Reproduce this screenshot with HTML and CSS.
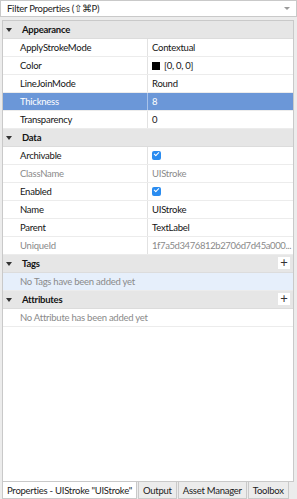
FILE: index.html
```html
<!DOCTYPE html>
<html lang="en">
<head>
<meta charset="UTF-8" />
<title>Properties</title>
<link rel="stylesheet" href="styles.css">
</head>
<body>
  <div class="window">
    <!-- Filter box -->
    <div class="filter">
      <span class="filter-text">Filter Properties (⇧⌘P)</span>
      <span class="filter-arrow"></span>
    </div>

    <!-- Property grid -->
    <div class="panel">
      <div class="section-head"><span class="caret"></span>Appearance</div>
      <div class="row"><div class="key">ApplyStrokeMode</div><div class="val">Contextual</div></div>
      <div class="row"><div class="key">Color</div><div class="val"><span class="swatch"></span>[0, 0, 0]</div></div>
      <div class="row"><div class="key">LineJoinMode</div><div class="val">Round</div></div>
      <div class="row selected"><div class="key">Thickness</div><div class="val">8</div></div>
      <div class="row"><div class="key">Transparency</div><div class="val">0</div></div>

      <div class="section-head"><span class="caret"></span>Data</div>
      <div class="row"><div class="key">Archivable</div><div class="val"><span class="check"></span></div></div>
      <div class="row muted"><div class="key">ClassName</div><div class="val">UIStroke</div></div>
      <div class="row"><div class="key">Enabled</div><div class="val"><span class="check"></span></div></div>
      <div class="row"><div class="key">Name</div><div class="val">UIStroke</div></div>
      <div class="row"><div class="key">Parent</div><div class="val">TextLabel</div></div>
      <div class="row muted"><div class="key">UniqueId</div><div class="val uid">1f7a5d3476812b2706d7d45a000...</div></div>

      <div class="section-head"><span class="caret"></span>Tags<span class="plus">+</span></div>
      <div class="empty tinted">No Tags have been added yet</div>

      <div class="section-head"><span class="caret"></span>Attributes<span class="plus">+</span></div>
      <div class="empty">No Attribute has been added yet</div>
    </div>

    <!-- Bottom tabs -->
    <div class="tabs">
      <div class="tab active">Properties - UIStroke "UIStroke"</div>
      <div class="tab">Output</div>
      <div class="tab">Asset Manager</div>
      <div class="tab">Toolbox</div>
    </div>
  </div>
</body>
</html>
```

FILE: styles.css
```css
/* Base */
body {
  margin: 0;
  font-family: Lato, "Open Sans", sans-serif;
  font-size: 9.5px;
  letter-spacing: -0.25px;
  color: #141414;
  background: #ececec;
}

.window {
  height: 499px;
  display: flex;
  flex-direction: column;
}

/* Filter box at the top */
.filter {
  height: 15px;
  background: #fff;
  border: 1px solid #c9c9c9;
  display: flex;
  align-items: center;
  justify-content: space-between;
  padding: 0 6px 0 6px;
}
.filter-text {
  color: #222;
}
.filter-arrow {
  width: 0;
  height: 0;
  border-left: 3px solid transparent;
  border-right: 3px solid transparent;
  border-top: 3px solid #9a9a9a;
}

/* Property grid */
.panel {
  flex: 1;
  margin: 3px 3px 0 2px;
  background: #fff;
  border: 1px solid #c9c9c9;
}

.section-head {
  height: 17px;
  background: #e6e6e6;
  border-bottom: 1px solid #dcdcdc;
  display: flex;
  align-items: center;
  font-weight: 700;
  position: relative;
}
.caret {
  width: 0;
  height: 0;
  border-left: 3px solid transparent;
  border-right: 3px solid transparent;
  border-top: 4px solid #333;
  margin: 0 10px 0 3px;
}
.plus {
  position: absolute;
  right: 3px;
  top: 2px;
  width: 12px;
  height: 12px;
  background: #fff;
  font-weight: 400;
  font-size: 13px;
  line-height: 11px;
  text-align: center;
  color: #333;
}

.row {
  height: 17px;
  display: flex;
  border-bottom: 1px solid #ececec;
}
.key {
  width: 127px;
  padding-left: 17px;
  border-right: 1px solid #e2e2e2;
  display: flex;
  align-items: center;
}
.val {
  flex: 1;
  min-width: 0;
  padding-left: 4px;
  display: flex;
  align-items: center;
}
.val.uid {
  white-space: nowrap;
  letter-spacing: -0.4px;
}
.row.muted {
  color: #8a8a8a;
}
.row.selected {
  background: #6b97d8;
  color: #fff;
}
.row.selected .key {
  border-right-color: #a9c3ea;
}

.swatch {
  width: 8px;
  height: 8px;
  background: #000;
  margin-right: 4px;
}
.check {
  width: 9px;
  height: 9px;
  border-radius: 2px;
  background: #2a8cf0;
  position: relative;
}
.check::after {
  content: "";
  position: absolute;
  left: 2px;
  top: 1px;
  width: 4px;
  height: 2px;
  border-left: 1.5px solid #fff;
  border-bottom: 1.5px solid #fff;
  transform: rotate(-45deg);
}

.empty {
  height: 17px;
  border-bottom: 1px solid #ececec;
  padding-left: 17px;
  display: flex;
  align-items: center;
  color: #8a8a8a;
}
.empty.tinted {
  background: #e6effb;
}

/* Bottom tabs */
.tabs {
  display: flex;
  gap: 1px;
  padding: 0 2px;
  height: 17px;
  background: #ececec;
}
.tab {
  padding: 0 4px;
  border: 1px solid #c9c9c9;
  border-top: none;
  display: flex;
  align-items: center;
  white-space: nowrap;
  background: #ececec;
  color: #222;
}
.tab.active {
  background: #fff;
}
```
